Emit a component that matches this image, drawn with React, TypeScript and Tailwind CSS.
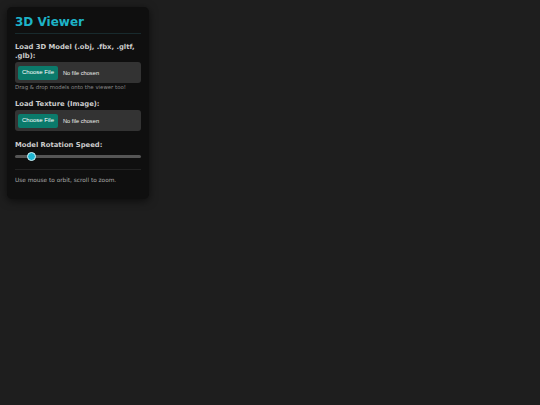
import { useState } from "react";

const sans = "font-['DejaVu_Sans',Verdana,sans-serif]";

function FilePicker({ accept }: { accept: string }) {
  const [name, setName] = useState("No file chosen");

  return (
    <label className="flex h-[21px] w-full cursor-pointer items-center gap-[5px] rounded-[3px] bg-[#333] px-[3px] font-['Liberation_Sans',Arial,sans-serif]">
      <input
        type="file"
        accept={accept}
        className="hidden"
        onChange={(e) => setName(e.target.files?.[0]?.name ?? "No file chosen")}
      />
      <span className="flex h-[14px] w-[40px] items-center justify-center rounded-[2px] bg-[#0b7a6b] text-[6px] text-white">
        Choose File
      </span>
      <span className="text-[5.7px] text-[#eee]">{name}</span>
    </label>
  );
}

function FieldLabel({ children }: { children: string }) {
  return (
    <p className={`${sans} mb-[1px] text-[6.8px] font-bold leading-[9px] text-[#ccc]`}>
      {children}
    </p>
  );
}

export default function App() {
  const [speed, setSpeed] = useState(10);

  return (
    <div className="min-h-[405px] w-full bg-[#1e1e1e] p-[7px]">
      <div className="w-[142px] rounded-[5px] bg-[#0f0f0f] px-[8px] pb-[14px] pt-[8px] shadow-[0_2px_8px_rgba(0,0,0,0.6)]">
        <h2
          className={`${sans} border-b border-[#182a2d] pb-[4px] text-[12px] font-bold leading-[14.4px] text-[#1db3c8]`}
        >
          3D Viewer
        </h2>

        <div className="mt-[9px]">
          <FieldLabel>Load 3D Model (.obj, .fbx, .gltf, .glb):</FieldLabel>
          <FilePicker accept=".obj,.fbx,.gltf,.glb" />
          <p className={`${sans} mt-[1px] text-[5.4px] leading-[7px] text-[#8a8a8a]`}>
            Drag &amp; drop models onto the viewer too!
          </p>
        </div>

        <div className="mt-[9px]">
          <FieldLabel>Load Texture (Image):</FieldLabel>
          <FilePicker accept="image/*" />
        </div>

        <div className="mt-[10px]">
          <FieldLabel>Model Rotation Speed:</FieldLabel>
          <input
            type="range"
            min={0}
            max={100}
            value={speed}
            onChange={(e) => setSpeed(Number(e.target.value))}
            className="mt-[5px] block h-[3px] w-full cursor-pointer appearance-none rounded-full bg-[#555] [&::-webkit-slider-thumb]:h-[9px] [&::-webkit-slider-thumb]:w-[9px] [&::-webkit-slider-thumb]:appearance-none [&::-webkit-slider-thumb]:rounded-full [&::-webkit-slider-thumb]:border [&::-webkit-slider-thumb]:border-[#d8f4f8] [&::-webkit-slider-thumb]:bg-[#1fb6d2]"
          />
        </div>

        <p
          className={`${sans} mt-[11px] border-t border-[#222] pt-[7px] text-[5.8px] leading-[7.5px] text-[#aaa]`}
        >
          Use mouse to orbit, scroll to zoom.
        </p>
      </div>
    </div>
  );
}
